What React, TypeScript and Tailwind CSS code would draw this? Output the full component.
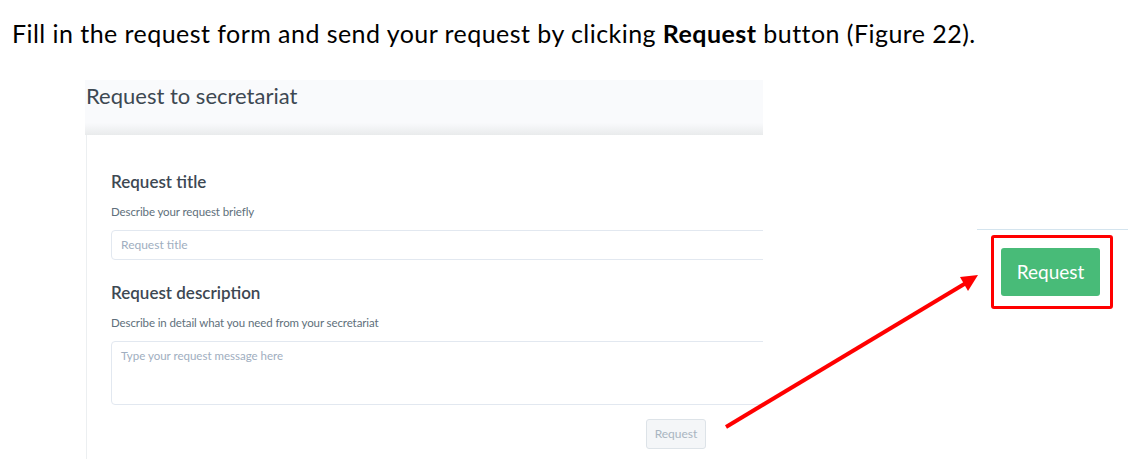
import React from "react";

export default function App() {
  return (
    <div className="relative w-[1147px] h-[471px] bg-white overflow-hidden flex flex-col font-['Lato','Liberation_Sans',sans-serif]">
      <p className="pl-[12px] pt-[19px] text-[25px] leading-[28px] tracking-[0.45px] text-black">
        Fill in the request form and send your request by clicking <b>Request</b> button (Figure 22).
      </p>
      <div className="flex mt-[33px]">
        {/* Screenshot 1 */}
        <div className="ml-[85px] w-[678px] h-[379px] overflow-hidden flex flex-col">
          <div className="h-[55px] shrink-0 bg-[linear-gradient(to_bottom,#f9fafc_78%,#e9ebec)] pt-[4px]">
            <div className="text-[22px] leading-[24px] text-[#3d4852] ml-[1px]">Request to secretariat</div>
          </div>
          <div className="ml-[1px] flex-1 border-l border-[#eceff1] bg-white pl-[24px] flex flex-col">
            <div className="pt-[36px] text-[17px] leading-[22px] font-semibold text-[#3d4852]">Request title</div>
            <div className="mt-[11px] text-[11.5px] leading-[16px] tracking-[-0.1px] text-[#606f7b]">Describe your request briefly</div>
            <div className="mt-[10px] w-[700px] h-[30px] shrink-0 rounded-[4px] border border-[#e2e8f0] pl-[9px] flex items-center text-[12px] text-[#a0aec0]">
              Request title
            </div>
            <div className="mt-[22px] text-[17px] leading-[22px] font-semibold text-[#3d4852]">Request description</div>
            <div className="mt-[11px] text-[11.5px] leading-[16px] tracking-[-0.1px] text-[#606f7b]">Describe in detail what you need from your secretariat</div>
            <div className="mt-[10px] w-[700px] h-[64px] shrink-0 rounded-[4px] border border-[#e2e8f0] pl-[9px] pt-[6px] text-[11.5px] leading-[16px] text-[#a0aec0]">
              Type your request message here
            </div>
            <div className="mt-[14px] ml-[535px] w-[60px] h-[30px] shrink-0 rounded-[3px] border border-[#dde3e8] bg-[#f4f6f8] flex items-center justify-center text-[12px] text-[#a9b5c1]">
              Request
            </div>
          </div>
        </div>
        {/* Screenshot 2 */}
        <div className="ml-[214px] mt-[149px] flex flex-col">
          <div className="w-[151px] h-px bg-[#d4e4ee]" />
          <div className="ml-[14px] mt-[5px] w-[122px] h-[74px] border-[3px] border-[#ff0000] rounded-[3px] pl-[7px] pt-[10px]">
            <div className="w-[99px] h-[48px] bg-[#48bb78] rounded-[3px] flex items-center justify-center text-[19px] text-white">
              Request
            </div>
          </div>
        </div>
      </div>
      <svg className="absolute left-0 top-0 pointer-events-none" width="1147" height="471">
        <line x1="726" y1="427" x2="966" y2="283" stroke="#ff0000" strokeWidth="4" />
        <polygon points="978,275 960,277 968,291" fill="#ff0000" />
      </svg>
    </div>
  );
}
